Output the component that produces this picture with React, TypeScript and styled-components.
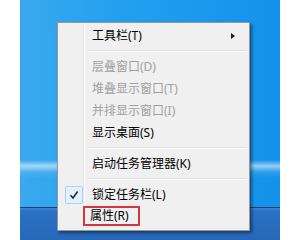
import * as React from 'react';
import styled, { createGlobalStyle } from 'styled-components';

const GlobalStyle = createGlobalStyle`
  html, body {
    margin: 0;
    padding: 0;
    background: #ffffff;
  }
  body {
    font-family: 'Noto Sans', 'Noto Sans CJK SC', sans-serif;
  }
`;

type Entry =
  | { kind: 'item'; label: string; disabled?: boolean; submenu?: boolean; checked?: boolean; marked?: boolean }
  | { kind: 'sep' };

const entries: Entry[] = [
  { kind: 'item', label: '工具栏(T)', submenu: true },
  { kind: 'sep' },
  { kind: 'item', label: '层叠窗口(D)', disabled: true },
  { kind: 'item', label: '堆叠显示窗口(T)', disabled: true },
  { kind: 'item', label: '并排显示窗口(I)', disabled: true },
  { kind: 'item', label: '显示桌面(S)' },
  { kind: 'sep' },
  { kind: 'item', label: '启动任务管理器(K)' },
  { kind: 'sep' },
  { kind: 'item', label: '锁定任务栏(L)', checked: true },
  { kind: 'item', label: '属性(R)', marked: true },
];

export default function App() {
  return (
    <>
      <GlobalStyle />
      <Page>
        <Desktop>
          <Wallpaper />
          <Taskbar />
          <Menu>
            {entries.map((e, i) =>
              e.kind === 'sep' ? (
                <Separator key={i} />
              ) : (
                <Item key={i} $disabled={e.disabled}>
                  <Gutter>
                    {e.checked && (
                      <CheckBox>
                        <svg width="10" height="10" viewBox="0 0 10 10">
                          <path d="M1.5 5.2 L4 8 L8.6 1.5" fill="none" stroke="#1b2a4a" strokeWidth="1.6" />
                        </svg>
                      </CheckBox>
                    )}
                  </Gutter>
                  <Label $marked={e.marked}>{e.label}</Label>
                  {e.submenu && <Arrow />}
                </Item>
              )
            )}
          </Menu>
        </Desktop>
      </Page>
    </>
  );
}

const Page = styled.div`
  width: 300px;
  height: 240px;
  display: flex;
  padding-left: 20px;
  box-sizing: border-box;
`;

const Desktop = styled.div`
  position: relative;
  width: 260px;
  height: 240px;
  display: flex;
  flex-direction: column;
  overflow: hidden;
`;

const Wallpaper = styled.div`
  flex: 1;
  background:
    linear-gradient(180deg, transparent 0, transparent 160px, rgba(255,255,255,0.55) 166px, rgba(255,255,255,0.1) 172px, transparent 178px),
    linear-gradient(90deg, #3aa9ee 0%, #22a0ef 40%, #1491ea 100%);
`;

const Taskbar = styled.div`
  height: 32px;
  background: linear-gradient(180deg, #3f86d2 0, #2b72c4 3px, #2767b7 100%);
  border-top: 1px solid #0f3f7a;
`;

const Menu = styled.div`
  position: absolute;
  left: 37px;
  top: 22px;
  width: 187px;
  padding: 2px;
  background: #f0f0f0;
  border: 1px solid #979797;
  box-shadow: 2px 2px 3px rgba(0, 0, 0, 0.45);
  font-size: 12px;
  display: flex;
  flex-direction: column;
  background-image: linear-gradient(90deg, transparent 25px, #e2e3e3 25px, #e2e3e3 26px, #ffffff 26px, #ffffff 27px, transparent 27px);
`;

const Item = styled.div<{ $disabled?: boolean }>`
  height: 22px;
  display: flex;
  align-items: center;
  color: ${(p) => (p.$disabled ? '#a0a0a0' : '#000000')};
  position: relative;
`;

const Gutter = styled.div`
  width: 25px;
  height: 22px;
  display: flex;
  align-items: center;
  justify-content: center;
`;

const CheckBox = styled.div`
  width: 18px;
  height: 18px;
  box-sizing: border-box;
  border: 1px solid #aad3ec;
  border-radius: 2px;
  background: #e4f1fb;
  display: flex;
  align-items: center;
  justify-content: center;
  margin-left: 2px;
`;

const Label = styled.span<{ $marked?: boolean }>`
  margin-left: 7px;
  white-space: nowrap;
  line-height: 20px;
  ${(p) =>
    p.$marked &&
    `
    margin-left: -2px;
    margin-top: -2px;
    padding: 0 11px 0 7px;
    box-shadow: inset 0 0 0 2px #d4383c;
  `}
`;

const Arrow = styled.span`
  position: absolute;
  right: 12px;
  top: 8px;
  width: 0;
  height: 0;
  border-top: 3.5px solid transparent;
  border-bottom: 3.5px solid transparent;
  border-left: 4px solid #1a1a1a;
`;

const Separator = styled.div`
  height: 1px;
  margin: 3px 0 4px 28px;
  background: #e0e0e0;
  border-bottom: 1px solid #ffffff;
`;
